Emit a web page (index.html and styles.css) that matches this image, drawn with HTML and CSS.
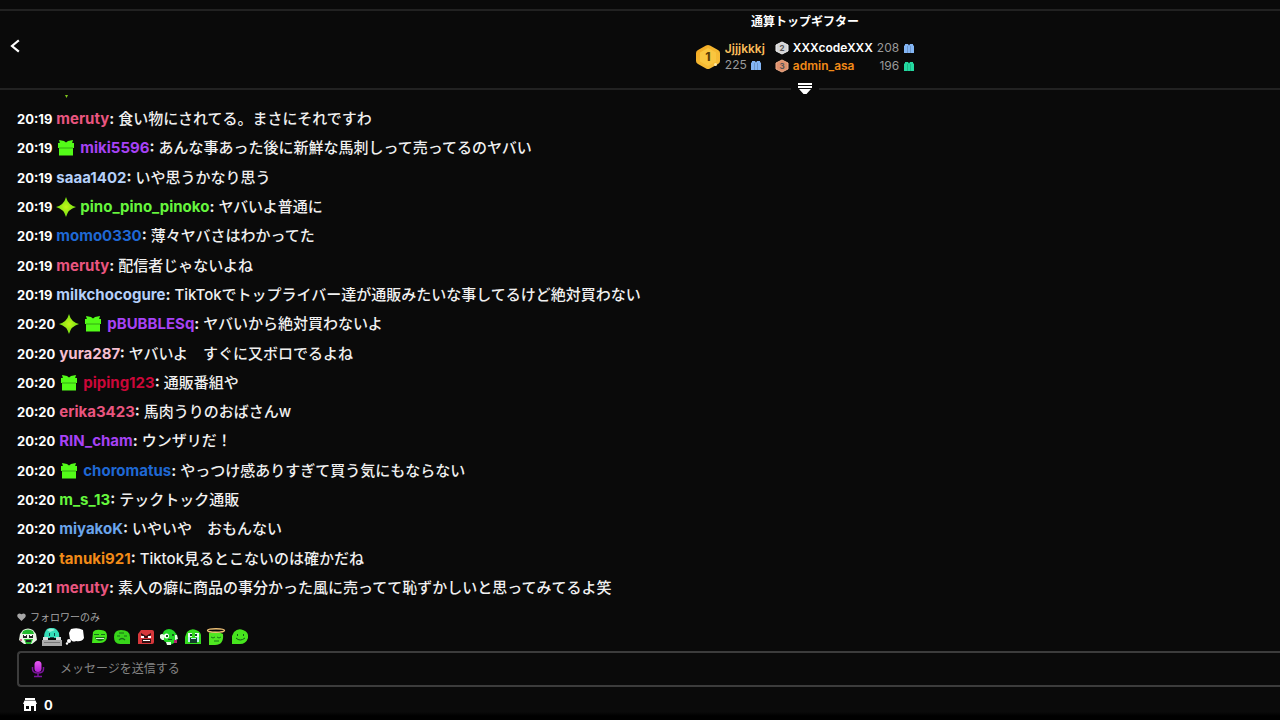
FILE: index.html
```html
<!DOCTYPE html>
<html lang="ja">
<head>
<meta charset="utf-8">
<meta name="viewport" content="width=device-width, initial-scale=1">
<title>チャット</title>
<link rel="stylesheet" href="styles.css">
</head>
<body>
<svg class="defs" aria-hidden="true">
  <defs>
    <linearGradient id="gold" x1="0" y1="0" x2="1" y2="1"><stop offset="0" stop-color="#f2a51f"/><stop offset=".5" stop-color="#f5b932"/><stop offset="1" stop-color="#f8bd3a"/></linearGradient>
    <radialGradient id="lime"><stop offset="0" stop-color="#c4f51a"/><stop offset="1" stop-color="#6fe012"/></radialGradient>
    <linearGradient id="mic-fill" x1="0" y1="0" x2="0" y2="1"><stop offset="0" stop-color="#e65af0"/><stop offset="1" stop-color="#b51fd6"/></linearGradient>
  </defs>
  <symbol id="gift" viewBox="0 0 20 20"><path fill="#53fc18" d="M2 5h16v5H2zM3 10h14v7.500H3zM3 2l5 1 2 1.500L12 3l5-1-1 3.500H4z"/><path stroke="#2d9412" stroke-width=".8" d="M3 10h14"/></symbol>
  <symbol id="spark" viewBox="0 0 20 20"><path fill="url(#lime)" d="M10 0Q12 8 20 10Q12 12 10 20Q8 12 0 10Q8 8 10 0Z"/></symbol>
  <symbol id="present" viewBox="0 0 12 10"><path fill="currentColor" d="M1 2.500h10V10H1zM2 1h3l1 1.500L7 1h3v2H2z"/><path stroke="#0b0b0b" stroke-opacity=".3" stroke-width=".6" d="M4.500 3v7M7.500 3v7"/></symbol>
</svg>

<header class="top">
  <button class="back" type="button" aria-label="戻る"><svg viewBox="0 0 12 14"><path d="M9 2 3 7l6 5" fill="none" stroke="#fff" stroke-width="2.200" stroke-linecap="square"/></svg></button>
  <section class="gifters">
    <h1>通算トップギフター</h1>
    <div class="ranks">
      <div class="first">
        <svg class="medal-big" viewBox="0 0 26 26"><path d="M13 1Q14 1 15 1.600L23 6Q25 7 25 9v8q0 2-2 3l-8 4.500q-2 1-4 0L3 20q-2-1-2-3V9q0-2 2-3l8-4.400Q12 1 13 1Z" fill="url(#gold)"/><path d="m13 4 8 4.500v9L13 22l-8-4.500v-9z" fill="#fac63f"/><text x="13" y="17" text-anchor="middle">1</text><circle cx="20.500" cy="20.500" r="1.500" fill="#ffeaa4"/></svg>
        <div class="first-text"><b>Jjjjkkkj</b><span>225 <svg class="present blue"><use href="#present"/></svg></span></div>
      </div>
      <table class="others">
        <tr><td><svg class="medal" viewBox="0 0 14 14"><path d="m7 1 6 3v6l-6 3-6-3V4z" fill="#d4d4d6" stroke="#eee"/><text x="7" y="10" text-anchor="middle">2</text></svg></td><td class="white">XXXcodeXXX</td><td class="count">208</td><td><svg class="present blue"><use href="#present"/></svg></td></tr>
        <tr><td><svg class="medal" viewBox="0 0 14 14"><path d="m7 1 6 3v6l-6 3-6-3V4z" fill="#de906c" stroke="#f0ad89"/><text x="7" y="10" text-anchor="middle">3</text></svg></td><td class="orange">admin_asa</td><td class="count">196</td><td><svg class="present teal"><use href="#present"/></svg></td></tr>
      </table>
    </div>
  </section>
  <div class="divider"><button type="button" aria-label="ランキングを開く"><svg viewBox="0 0 14 12"><path fill="#fff" d="M0 0h14v2H0zM0 3h14v2H0zM1 6h12L8.500 11h-3z"/></svg></button></div>
</header>

<main class="chat">
  <div class="clipped"><svg viewBox="0 0 4 4"><path fill="#7fc81c" d="M0 0h4L2 4z"/></svg></div>
  <ol class="messages">
    <li><time>20:19</time><p><b class="rose">meruty</b><b>:</b> 食い物にされてる。まさにそれですわ</p></li>
    <li><time>20:19</time><svg class="badge"><use href="#gift"/></svg><p><b class="purple">miki5596</b><b>:</b> あんな事あった後に新鮮な馬刺しって売ってるのヤバい</p></li>
    <li><time>20:19</time><p><b class="pale">saaa1402</b><b>:</b> いや思うかなり思う</p></li>
    <li><time>20:19</time><svg class="badge"><use href="#spark"/></svg><p><b class="green">pino_pino_pinoko</b><b>:</b> ヤバいよ普通に</p></li>
    <li><time>20:19</time><p><b class="royal">momo0330</b><b>:</b> 薄々ヤバさはわかってた</p></li>
    <li><time>20:19</time><p><b class="rose">meruty</b><b>:</b> 配信者じゃないよね</p></li>
    <li><time>20:19</time><p><b class="pale">milkchocogure</b><b>:</b> TikTokでトップライバー達が通販みたいな事してるけど絶対買わない</p></li>
    <li><time>20:20</time><svg class="badge"><use href="#spark"/></svg><svg class="badge"><use href="#gift"/></svg><p><b class="purple">pBUBBLESq</b><b>:</b> ヤバいから絶対買わないよ</p></li>
    <li><time>20:20</time><p><b class="blush">yura287</b><b>:</b> ヤバいよ　すぐに又ボロでるよね</p></li>
    <li><time>20:20</time><svg class="badge"><use href="#gift"/></svg><p><b class="red">piping123</b><b>:</b> 通販番組や</p></li>
    <li><time>20:20</time><p><b class="rose">erika3423</b><b>:</b> 馬肉うりのおばさんw</p></li>
    <li><time>20:20</time><p><b class="purple">RIN_cham</b><b>:</b> ウンザリだ！</p></li>
    <li><time>20:20</time><svg class="badge"><use href="#gift"/></svg><p><b class="royal">choromatus</b><b>:</b> やっつけ感ありすぎて買う気にもならない</p></li>
    <li><time>20:20</time><p><b class="green">m_s_13</b><b>:</b> テックトック通販</p></li>
    <li><time>20:20</time><p><b class="sky">miyakoK</b><b>:</b> いやいや　おもんない</p></li>
    <li><time>20:20</time><p><b class="orange">tanuki921</b><b>:</b> Tiktok見るとこないのは確かだね</p></li>
    <li><time>20:21</time><p><b class="rose">meruty</b><b>:</b> 素人の癖に商品の事分かった風に売ってて恥ずかしいと思ってみてるよ笑</p></li>
  </ol>
</main>

<footer class="composer">
  <p class="mode"><svg viewBox="0 0 10 10"><path fill="#a6a6a6" d="M5 9.500 1 5.500C-1 3 1.500-.5 5 2c3.500-2.500 6 1 4 3.500z"/></svg>フォロワーのみ</p>
  <div class="emotes">
    <button type="button" aria-label="エモート1"><svg viewBox="0 0 20 18"><path fill="#e9f3e5" d="M5 2q5-3 10 0l3 4 1 6-5 4H6l-5-4 1-6z"/><path fill="#21b92c" d="M5 3q5-3 10 0l1 3H4zM6 11h9l-2 5H8z"/><path fill="#222" d="M5 7h4v3H5zM11 7h4v3h-4zM8 12h5v2H8z"/><path fill="#fff" d="M6 7h2v1H6zM12 7h2v1h-2z"/><circle cx="3" cy="12" r="1" fill="#c83c70"/></svg></button>
    <button type="button" aria-label="エモート2"><svg viewBox="0 0 20 18"><path fill="#34ddb8" d="M5 1q6-3 10 1 3 3 2 8H2q0-6 3-9z"/><path fill="#9af2d8" d="M5 2q4-3 8 0L8 4z"/><path fill="#134b4a" d="M7 5h1v3H7zM12 5h1v3h-1zM8 9h4v1H8z"/><path fill="#d5dddd" d="M1 9h5v3h8V9h5v3H1z"/><path fill="#aaa" d="M0 12h20v6H0z"/><path stroke="#777" d="M2 14.500h16"/></svg></button>
    <button type="button" aria-label="エモート3"><svg viewBox="0 0 20 18"><path fill="#fff" d="M6 1q7-2 12 1l1 8q-2 4-8 3-2 1-4 0l-2-2-1-6z"/><circle cx="4" cy="13" r="2" fill="#fff"/><circle cx="2" cy="15.500" r="1.200" fill="#fff"/></svg></button>
    <button type="button" aria-label="エモート4"><svg viewBox="0 0 20 18"><path fill="#42e51b" d="M4 4q2-3 8-2 6 0 6 6 0 7-7 7H3z"/><path fill="#176e18" d="M5 6h5v1H5zM12 6h4v1h-4zM6 9h10q-1 4-5 4t-5-4z"/><path fill="#d9f6d3" d="M7 10h8v1H7z"/></svg></button>
    <button type="button" aria-label="エモート5"><svg viewBox="0 0 20 18"><path fill="#38d51a" d="M2 9q0-7 7-7 9 0 9 7v7H8q-6 0-6-7z"/><path fill="none" stroke="#176e18" stroke-width="1.200" d="M5 8h3M12 8h3M7 12q3-3 6 0M7 5h5"/></svg></button>
    <button type="button" aria-label="エモート6"><svg viewBox="0 0 20 18"><path fill="#d7373b" d="M5 2h11q2 0 2 2v10q0 2-2 2H2V6z"/><path fill="#351113" d="m5 5 5 3 5-3v2l-4 3H9L5 7zM6 11h9v4H6z"/><path fill="#fff" d="M5 8h3v2H5zM12 8h3v2h-3zM7 12h7v1H7z"/></svg></button>
    <button type="button" aria-label="エモート7"><svg viewBox="0 0 20 18"><path fill="#25d928" d="M5 3q5-4 10 0l3 4-1 7-6 3-6-4-2-6z"/><path fill="#e7fbe6" d="M1 7q2-2 4 0v5H3L1 10zM16 7h2l1 4-3 1zM7 14h5v3H8z"/><circle cx="7.500" cy="8" r="2.500" fill="#fff"/><path fill="#145d19" d="M7 7h2v2H7zM13 6h2v2h-2zM9 11h4v1H9z"/><path fill="#b52372" d="M15 12h3v3h-3z"/></svg></button>
    <button type="button" aria-label="エモート8"><svg viewBox="0 0 20 18"><path fill="#35db20" d="M4 4q4-4 9-2 6 2 5 8v6H2V9z"/><path fill="#e8fff1" d="M5 5h4v4H5zM12 5h4v4h-4z"/><path fill="#123e2b" d="M7 6h2v2H7zM12 6h2v2h-2zM7 10h7v5H7z"/><path fill="#bfeff4" d="M5 9h2v5H5zM14 9h2v5h-2zM8 10h5v1H8z"/></svg></button>
    <button type="button" aria-label="エモート9"><svg viewBox="0 0 20 18"><path fill="#4fe721" d="M3 5q7-3 14 1 1 11-8 11H3z"/><path fill="none" stroke="#187819" d="M5 9q2 2 4 0M11 9q2 2 4 0M8 13h5"/><ellipse cx="10" cy="2.500" rx="8.500" ry="1.800" fill="none" stroke="#efc176" stroke-width="1.400"/></svg></button>
    <button type="button" aria-label="エモート10"><svg viewBox="0 0 20 18"><path fill="#47e51e" d="M4 4q4-4 9-2 6 2 5 8-2 6-8 6H2V8z"/><path fill="#125c17" d="M7 6h1v2H7zM13 6h1v2h-1z"/><path fill="none" stroke="#125c17" d="M6 10q4 4 9 0"/></svg></button>
  </div>
  <div class="field">
    <svg class="mic" viewBox="0 0 14 18"><path fill="none" stroke="#7b159d" stroke-width="1.500" d="M1.500 7v2q0 4 5.500 4t5.500-4V7M7 13v3M3 16.500h8"/><rect x="3.500" y="1" width="7" height="11" rx="3.500" fill="url(#mic-fill)"/></svg>
    <input type="text" aria-label="メッセージ" placeholder="メッセージを送信する">
  </div>
  <button class="points" type="button"><svg viewBox="0 0 14 14"><path fill="#fff" d="M2 0h10v2H2zM1.500 2.500h11L14 6H0zM1 6h12v7h-2V8H8v5H1zM3 8v3h3V8z" fill-rule="evenodd"/></svg>0</button>
</footer>
</body>
</html>
```
FILE: styles.css
```css
* { box-sizing: border-box; }
body {
  margin: 0;
  min-height: 100vh;
  display: flex;
  flex-direction: column;
  overflow-x: hidden;
  background: linear-gradient(#0a0a0a calc(100% - 8px), #000 calc(100% - 4px));
  color: #fff;
  font-family: Inter, "Noto Sans CJK JP", sans-serif;
}
button { border: 0; padding: 0; background: none; color: inherit; font: inherit; }
svg { display: block; flex: none; }
h1, p, ol { margin: 0; padding: 0; }
.defs { position: absolute; width: 0; height: 0; }

.top {
  margin-top: 9px;
  border-top: 2px solid #222;
  display: grid;
  grid-template-columns: 330px 1fr;
}
.back { justify-self: start; align-self: start; margin: 28px 0 0 9px; }
.back svg { width: 12px; height: 14px; }
.gifters { display: flex; flex-direction: column; align-items: center; height: 72px; }
.gifters h1 { margin-top: 1px; font-size: 12px; line-height: 20px; font-weight: 700; }
.ranks { display: flex; align-items: center; gap: 10px; margin-top: 7px; }
.first { display: flex; align-items: center; gap: 4px; }
.first-text { display: flex; flex-direction: column; font-size: 12px; line-height: 16px; }
.first-text b { font-size: 12px; font-weight: 600; color: #f8bd5c; }
.first-text span { display: flex; align-items: center; gap: 3px; color: #9a9a9a; }
.medal-big { width: 26px; height: 26px; }
.medal-big text { font: 800 12px Inter, sans-serif; fill: #5c3d08; }
.medal { width: 14px; height: 14px; }
.medal text { font: 700 8px Inter, sans-serif; fill: #555; }
.present { width: 12px; height: 10px; }
.blue { color: #83b5f5; }
.teal { color: #23d9a0; }
.others { border-collapse: collapse; font-size: 12px; line-height: 18px; font-weight: 600; }
.others td { height: 18px; padding: 0 4px 0 0; }
.others td:last-child { padding: 0; }
.others .count { color: #9a9a9a; font-weight: 400; text-align: right; }
.divider {
  grid-column: 1 / -1;
  display: flex;
  align-items: center;
  gap: 7px;
  height: 12px;
}
.divider::before, .divider::after { content: ""; flex: 1; height: 2px; background: #222; }
.divider::before { flex: 0 0 791px; }
.divider svg { width: 14px; height: 12px; }

.chat { flex: 1; display: flex; flex-direction: column; padding: 0 17px; }
.clipped { padding-left: 48px; }
.clipped svg { width: 3px; height: 3px; }
.messages {
  flex: 1;
  display: flex;
  flex-direction: column;
  justify-content: space-between;
  margin-top: 7px;
  list-style: none;
}
.messages li { display: flex; align-items: center; gap: 4px; line-height: 28px; font-size: 15px; }
time { font-size: 13px; font-weight: 700; }
.messages p { font-weight: 500; color: #f0f0f0; }
.messages b { font-weight: 700; }
.badge { width: 20px; height: 20px; }
.white { color: #fff; }
.rose { color: #e9557f; }
.purple { color: #a742f5; }
.pale { color: #b5d0fa; }
.green { color: #66f73d; }
.royal { color: #1f68d4; }
.blush { color: #f6bed0; }
.red { color: #cb0738; }
.sky { color: #6ba5ec; }
.orange { color: #f28b18; }

.composer { padding: 6px 0 5px 17px; }
.mode { display: flex; align-items: center; gap: 4px; color: #a6a6a6; font-size: 10px; line-height: 18px; }
.mode svg { width: 9px; height: 10px; }
.emotes { display: flex; justify-content: space-between; width: 233px; padding: 2px 0 5px 1px; }
.emotes svg { width: 20px; height: 18px; }
.field {
  display: flex;
  align-items: center;
  gap: 15px;
  height: 36px;
  padding-left: 12px;
  border: 2px solid #3c3c3c;
  border-right: 0;
  border-radius: 4px 0 0 4px;
}
.mic { width: 14px; height: 18px; }
.field input {
  flex: 1;
  min-width: 0;
  padding: 0;
  border: 0;
  outline: 0;
  background: none;
  color: #fff;
  font: 400 12px/20px Inter, "Noto Sans CJK JP", sans-serif;
}
.field input::placeholder { color: #858585; opacity: 1; }
.points { display: flex; align-items: center; gap: 7px; margin: 8px 0 0 6px; font-size: 13px; line-height: 20px; font-weight: 700; }
.points svg { width: 14px; height: 14px; }
```
